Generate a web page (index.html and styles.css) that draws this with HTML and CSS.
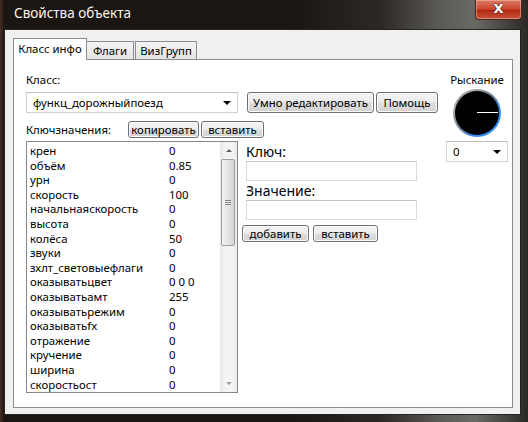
FILE: index.html
```html
<!DOCTYPE html>
<html lang="ru">
<head>
    <meta charset="UTF-8">
    <title>Свойства объекта</title>
    <link rel="stylesheet" href="styles.css">
</head>
<body>

<div class="window">
    <!-- Window caption -->
    <div class="titlebar">
        <span class="title">Свойства объекта</span>
        <span class="close">X</span>
    </div>

    <div class="client">
        <div class="tabs">
            <span class="tab active">Класс инфо</span>
            <span class="tab flags">Флаги</span>
            <span class="tab vis">ВизГрупп</span>
        </div>

        <div class="tab-page">
            <div class="main">
                <div class="label">Класс:</div>
                <div class="class-row">
                    <div class="combo class-combo">
                        <span>функц_дорожныйпоезд</span>
                        <span class="arrow"></span>
                    </div>
                    <button class="btn smart">Умно редактировать</button>
                    <button class="btn help">Помощь</button>
                </div>

                <div class="kv-row">
                    <span class="kv-label">Ключзначения:</span>
                    <button class="btn small copy">копировать</button>
                    <button class="btn small paste">вставить</button>
                </div>

                <div class="kv-body">
                    <div class="listbox">
                        <ul class="items">
                            <li><span class="key">крен</span><span>0</span></li>
                            <li><span class="key">объём</span><span>0.85</span></li>
                            <li><span class="key">урн</span><span>0</span></li>
                            <li><span class="key">скорость</span><span>100</span></li>
                            <li><span class="key">начальнаяскорость</span><span>0</span></li>
                            <li><span class="key">высота</span><span>0</span></li>
                            <li><span class="key">колёса</span><span>50</span></li>
                            <li><span class="key">звуки</span><span>0</span></li>
                            <li><span class="key">зхлт_световыефлаги</span><span>0</span></li>
                            <li><span class="key">оказыватьцвет</span><span>0 0 0</span></li>
                            <li><span class="key">оказыватьамт</span><span>255</span></li>
                            <li><span class="key">оказыватьрежим</span><span>0</span></li>
                            <li><span class="key">оказыватьfx</span><span>0</span></li>
                            <li><span class="key">отражение</span><span>0</span></li>
                            <li><span class="key">кручение</span><span>0</span></li>
                            <li><span class="key">ширина</span><span>0</span></li>
                            <li><span class="key">скоростьост</span><span>0</span></li>
                        </ul>
                        <div class="scrollbar">
                            <div class="sb-btn"><span class="tri up"></span></div>
                            <div class="sb-thumb"><span class="grip"></span></div>
                            <div class="sb-track"></div>
                            <div class="sb-btn"><span class="tri down"></span></div>
                        </div>
                    </div>

                    <div class="editor">
                        <div class="big-label">Ключ:</div>
                        <div class="field"></div>
                        <div class="big-label">Значение:</div>
                        <div class="field"></div>
                        <div class="editor-buttons">
                            <button class="btn small add">добавить</button>
                            <button class="btn small paste2">вставить</button>
                        </div>
                    </div>
                </div>
            </div>

            <!-- Yaw dial -->
            <div class="yaw">
                <div class="label">Рыскание</div>
                <div class="dial">
                    <div class="dial-face"></div>
                </div>
                <div class="combo yaw-combo">
                    <span>0</span>
                    <span class="arrow"></span>
                </div>
            </div>
        </div>
    </div>
</div>

</body>
</html>
```

FILE: styles.css
```css
* {
    box-sizing: border-box;
}

body {
    margin: 0;
    width: 528px;
    height: 422px;
    overflow: hidden;
    font-family: "Noto Sans", sans-serif;
    font-size: 11.4px;
    color: #000;
    background-color: #1a1714;
}

.window {
    width: 528px;
    height: 422px;
    display: flex;
    flex-direction: column;
    padding: 0 7px 7px 4px;
    background: linear-gradient(90deg, #4a3028 0, #1c1612 4px, #1a1612 55%, #2c2925 72%, #5f5d57 84%, #6a6862 90%, #45433f 96%, #2a2825 100%);
}

/* caption */
.titlebar {
    height: 29px;
    display: flex;
    align-items: flex-start;
}

.title {
    color: #f4f4f4;
    font-size: 13.5px;
    line-height: 26px;
    padding-left: 10px;
}

.close {
    margin-left: auto;
    margin-right: -1px;
    width: 47px;
    height: 20px;
    border: 1px solid #4a2018;
    border-top: none;
    border-radius: 0 0 4px 4px;
    background: linear-gradient(#dc7a66 0%, #cc4a32 45%, #b02a14 55%, #c9543a 100%);
    box-shadow: inset 0 0 0 1px rgba(255, 210, 190, 0.45);
    color: #fff;
    font-family: "DejaVu Sans", sans-serif;
    font-weight: bold;
    font-size: 13px;
    line-height: 18px;
    text-align: center;
    text-shadow: 0 0 2px #3a2a28, 0 0 1px #3a2a28;
}

.client {
    flex: 1;
    background-color: #f0f0f0;
    border: 1px solid #262420;
    padding: 8px 7px 0 8px;
}

/* tabs */
.tabs {
    display: flex;
    align-items: flex-end;
    height: 21px;
}

.tab {
    height: 18px;
    line-height: 17px;
    border: 1px solid #898c95;
    border-bottom: none;
    background: linear-gradient(#f4f4f4, #e4e4e4);
    text-align: center;
}

.tab.active {
    position: relative;
    width: 74px;
    height: 22px;
    line-height: 20px;
    margin-bottom: -1px;
    background: #fff;
}

.tab.flags {
    width: 47px;
    border-left: none;
}

.tab.vis {
    width: 62px;
    margin-left: 1px;
}

.tab-page {
    height: 349px;
    background: #fff;
    border: 1px solid #898c95;
    display: flex;
    padding: 12px 4px 0 12px;
}

.main {
    flex: 1;
}

.label {
    line-height: 15px;
}

.class-row {
    display: flex;
    align-items: center;
    margin-top: 5px;
}

.combo {
    height: 21px;
    border: 1px solid #d2d2d2;
    border-top-color: #c0c0c0;
    background: #fff;
    display: flex;
    align-items: center;
    padding: 0 6px 0 6px;
}

.combo .arrow {
    margin-left: auto;
    width: 0;
    height: 0;
    border-left: 4px solid transparent;
    border-right: 4px solid transparent;
    border-top: 4px solid #000;
}

.class-combo {
    width: 212px;
}

.btn {
    font: inherit;
    color: #000;
    padding: 0;
    height: 21px;
    border: 1px solid #707070;
    border-radius: 3px;
    background: linear-gradient(#f3f3f3 0%, #ececec 48%, #dedede 52%, #d2d2d2 100%);
    box-shadow: inset 0 0 0 1px #fbfbfb;
}

.btn.small {
    height: 17px;
    line-height: 14px;
}

.smart {
    width: 127px;
    margin-left: 9px;
}

.help {
    width: 62px;
    margin-left: 2px;
}

.kv-row {
    display: flex;
    align-items: center;
    margin-top: 8px;
    height: 17px;
}

.kv-label {
    width: 102px;
}

.copy {
    width: 71px;
}

.paste {
    width: 63px;
    margin-left: 2px;
}

.kv-body {
    display: flex;
    align-items: flex-start;
    margin-top: 3px;
}

/* key/value list */
.listbox {
    width: 212px;
    height: 252px;
    border: 1px solid #828790;
    display: flex;
}

.items {
    flex: 1;
    list-style: none;
    margin: 0;
    padding: 2px 0 0 3px;
    overflow: hidden;
}

.items li {
    display: flex;
    line-height: 14.6px;
    white-space: nowrap;
}

.items .key {
    width: 139px;
}

.scrollbar {
    width: 17px;
    display: flex;
    flex-direction: column;
    background: linear-gradient(90deg, #e6e6e6, #f4f4f4 30%, #f4f4f4 70%, #e9e9e9);
}

.sb-btn {
    height: 17px;
    display: flex;
    align-items: center;
    justify-content: center;
}

.tri {
    width: 0;
    height: 0;
    border-left: 3px solid transparent;
    border-right: 3px solid transparent;
}

.tri.up {
    border-bottom: 3px solid #606060;
}

.tri.down {
    border-top: 3px solid #a0a0a0;
}

.sb-thumb {
    height: 87px;
    margin: 0 2px 0 1px;
    border: 1px solid #9e9e9e;
    border-radius: 2px;
    background: linear-gradient(90deg, #f2f2f2, #e4e4e4 50%, #d6d6d6);
    display: flex;
    align-items: center;
    justify-content: center;
}

.grip {
    width: 6px;
    height: 6px;
    background: repeating-linear-gradient(#8a8a8a 0, #8a8a8a 1px, transparent 1px, transparent 2px);
}

.sb-track {
    flex: 1;
}

/* key / value editor */
.editor {
    margin-left: 4px;
}

.big-label {
    font-size: 14px;
    line-height: 19px;
    padding-left: 4px;
}

.big-label:first-child {
    margin-top: 1px;
}

.field {
    width: 171px;
    height: 20px;
    margin-left: 4px;
    border: 1px solid #dadada;
    border-top-color: #c4c4c4;
    background: #fff;
}

.editor-buttons {
    display: flex;
    margin-top: 5px;
}

.add {
    width: 67px;
}

.paste2 {
    width: 65px;
    margin-left: 4px;
}

/* yaw */
.yaw {
    width: 62px;
    display: flex;
    flex-direction: column;
    align-items: center;
}

.dial {
    width: 48px;
    height: 48px;
    margin-top: 2px;
    border-radius: 50%;
    padding: 2px;
    background: linear-gradient(135deg, #a4a4a4 25%, #6e7f95 50%, #2f8cf5 70%);
}

.dial-face {
    position: relative;
    width: 100%;
    height: 100%;
    border-radius: 50%;
    background: #000;
}

.dial-face::after {
    content: "";
    position: absolute;
    left: 22px;
    top: 21px;
    width: 21px;
    height: 1px;
    background: #fff;
}

.yaw-combo {
    width: 62px;
    margin-top: 4px;
}
```
